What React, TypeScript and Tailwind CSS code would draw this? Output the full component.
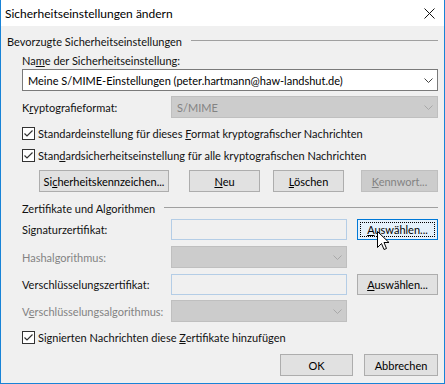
import type { ReactNode } from 'react'

function Chevron({ disabled }: { disabled?: boolean }) {
  return (
    <svg width="9" height="5" viewBox="0 0 9 5" className="shrink-0">
      <path d="M0.5 0.5 L4.5 4.5 L8.5 0.5" fill="none" stroke={disabled ? '#a8a8a8' : '#444'} strokeWidth="1" />
    </svg>
  )
}

function Select({ value, disabled, className }: { value?: string; disabled?: boolean; className: string }) {
  return (
    <div
      className={
        'flex items-center justify-between pl-[5px] pr-[4px] border ' +
        (disabled ? 'bg-[#cccccc] border-[#bfbfbf] text-[#838383] ' : 'bg-white border-[#7a7a7a] text-black ') +
        className
      }
    >
      <span className="whitespace-nowrap">{value}</span>
      <Chevron disabled={disabled} />
    </div>
  )
}

function Check({ children }: { children: ReactNode }) {
  return (
    <div className="flex items-center h-[16px]">
      <div className="w-[13px] h-[13px] border border-[#333333] bg-white flex items-center justify-center">
        <svg width="11" height="11" viewBox="0 0 11 11">
          <path d="M1.5 5.5 L4 8 L9.5 2.5" fill="none" stroke="#333" strokeWidth="1.2" />
        </svg>
      </div>
      <span className="ml-[3px] whitespace-nowrap">{children}</span>
    </div>
  )
}

function Btn({ children, className, disabled, focused }: { children: ReactNode; className: string; disabled?: boolean; focused?: boolean }) {
  let look = 'bg-[#e1e1e1] border-[#adadad] text-black'
  if (disabled) look = 'bg-[#cccccc] border-[#bfbfbf] text-[#838383]'
  if (focused) look = 'bg-[#e5f1fb] border-[#0078d7] text-black'
  return (
    <div className={'border flex items-center justify-center ' + look + ' ' + className}>
      {focused ? (
        <div className="border border-dotted border-black w-[calc(100%-4px)] h-[calc(100%-4px)] flex items-center justify-center">{children}</div>
      ) : (
        children
      )}
    </div>
  )
}

function Heading({ children }: { children: ReactNode }) {
  return (
    <div className="flex items-center h-[16px]">
      <span className="whitespace-nowrap">{children}</span>
      <div className="flex-1 h-px bg-[#a0a0a0] ml-[9px] mt-[-2px]" />
    </div>
  )
}

export default function App() {
  return (
    <div className="w-[445px] h-[384px] flex flex-col border-x border-b border-[#1883d7] text-[11px] leading-none text-[#111] select-none [font-family:Lato,'Liberation_Sans',sans-serif]">
      {/* Title bar */}
      <div className="h-[26px] bg-white flex items-center justify-between pl-[4px] pr-[9px] shrink-0">
        <span className="text-[12px] text-black pt-[1px]">Sicherheitseinstellungen ändern</span>
        <svg width="11" height="11" viewBox="0 0 11 11">
          <path d="M0.5 0.5 L10.5 10.5 M10.5 0.5 L0.5 10.5" stroke="#111" strokeWidth="1" />
        </svg>
      </div>

      {/* Body */}
      <div className="relative flex-1 bg-[#f0f0f0] pl-[6px] pr-[6px] pt-[7px] flex flex-col">
        <Heading>Bevorzugte Sicherheitseinstellungen</Heading>

        <div className="pl-[15px] flex flex-col">
          <div className="h-[16px] mt-[3px] flex items-center">
            <span>
              Na<u>m</u>e der Sicherheitseinstellung:
            </span>
          </div>
          <Select className="h-[22px] mt-[1px]" value="Meine S/MIME-Einstellungen (peter.hartmann@haw-landshut.de)" />

          <div className="flex items-center mt-[5px]">
            <span className="w-[149px]">
              K<u>r</u>yptografieformat:
            </span>
            <Select className="flex-1 h-[22px]" value="S/MIME" disabled />
          </div>

          <div className="mt-[7px]">
            <Check>
              Standardeinstellung für dieses <u>F</u>ormat kryptografischer Nachrichten
            </Check>
          </div>
          <div className="mt-[6px]">
            <Check>
              Stan<u>d</u>ardsicherheitseinstellung für alle kryptografischen Nachrichten
            </Check>
          </div>

          <div className="flex mt-[7px] h-[22px]">
            <Btn className="w-[130px] ml-[17px]">
              <span>
                Si<u>c</u>herheitskennzeichen...
              </span>
            </Btn>
            <Btn className="w-[71px] ml-[20px]">
              <span>
                <u>N</u>eu
              </span>
            </Btn>
            <Btn className="w-[71px] ml-[13px]">
              <span>
                <u>L</u>öschen
              </span>
            </Btn>
            <Btn className="w-[77px] ml-[17px]" disabled>
              <span>
                <u>K</u>ennwort...
              </span>
            </Btn>
          </div>

          <div className="mt-[8px]">
            <Heading>Zertifikate und Algorithmen</Heading>
          </div>

          <div className="flex items-center mt-[3px] h-[21px]">
            <span className="w-[149px]">Signaturzertifikat:</span>
            <div className="w-[176px] h-[21px] border border-[#b4cde6] bg-[#f0f0f0]" />
            <Btn className="w-[81px] h-[21px] ml-[10px]" focused>
              <span>
                <u>A</u>uswählen...
              </span>
            </Btn>
          </div>

          <div className="flex items-center mt-[6px]">
            <span className="w-[149px] text-[#838383]">Hashalgorithmus:</span>
            <Select className="w-[176px] h-[22px]" disabled />
          </div>

          <div className="flex items-center mt-[6px] h-[21px]">
            <span className="w-[149px]">Verschlüsselungszertifikat:</span>
            <div className="w-[176px] h-[21px] border border-[#b4cde6] bg-[#f0f0f0]" />
            <Btn className="w-[81px] h-[21px] ml-[10px]">
              <span>
                <u>A</u>uswählen...
              </span>
            </Btn>
          </div>

          <div className="flex items-center mt-[5px]">
            <span className="w-[149px] text-[#838383]">
              V<u>e</u>rschlüsselungsalgorithmus:
            </span>
            <Select className="w-[176px] h-[22px]" disabled />
          </div>

          <div className="mt-[7px]">
            <Check>
              Signierten Nachrichten diese <u>Z</u>ertifikate hinzufügen
            </Check>
          </div>
        </div>

        <div className="flex justify-end mt-[9px] h-[22px]">
          <Btn className="w-[73px]">OK</Btn>
          <Btn className="w-[74px] ml-[11px]">Abbrechen</Btn>
        </div>

        {/* Mouse pointer over the focused button */}
        <svg className="absolute left-[376px] top-[205px]" width="13" height="21" viewBox="0 0 13 21">
          <path
            d="M0.5 0.5 L0.5 16.5 L4.5 12.5 L7 18.5 L9.5 17.5 L7 11.5 L12 11.5 Z"
            fill="#fff"
            stroke="#000"
            strokeWidth="1"
            strokeLinejoin="miter"
          />
        </svg>
      </div>
    </div>
  )
}
